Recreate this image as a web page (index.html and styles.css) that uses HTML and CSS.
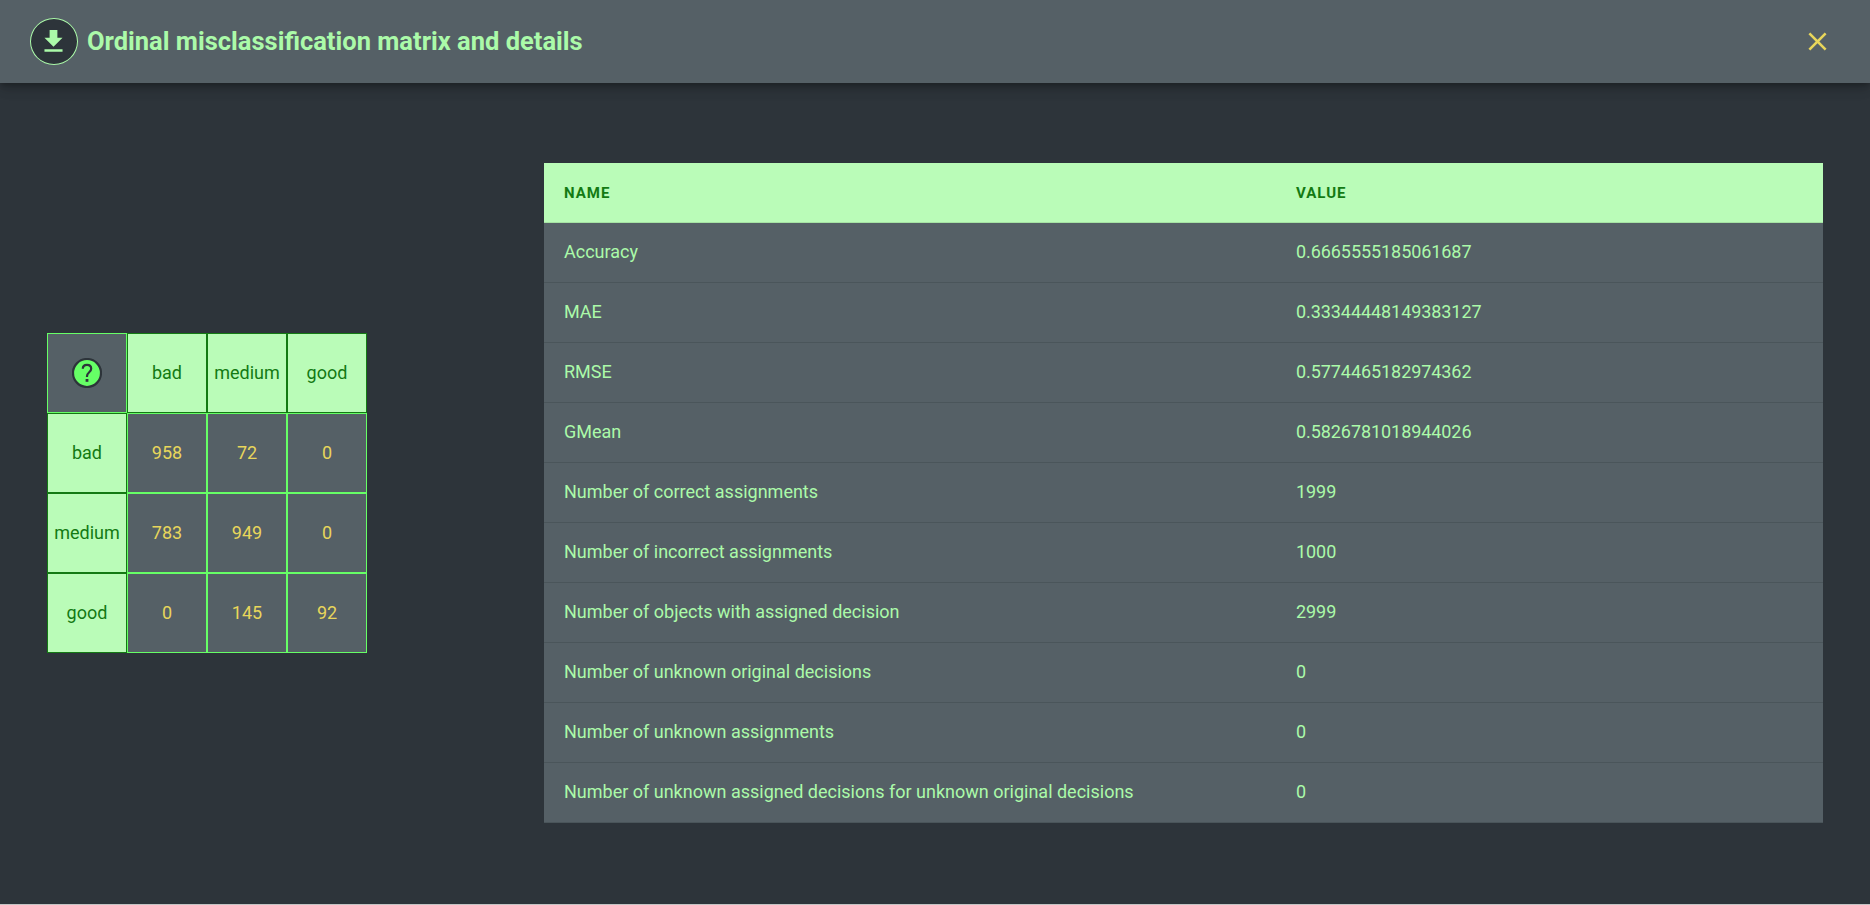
FILE: index.html
```html
<!DOCTYPE html>
<html lang="en">
<head>
<meta charset="utf-8">
<title>Ordinal misclassification matrix and details</title>
<link rel="stylesheet" href="styles.css">
</head>
<body>
<div class="dialog">
  <header class="dialog-header">
    <button class="icon-button download" aria-label="Download matrix">
      <svg class="icon" viewBox="0 0 24 24"><path d="M19 9h-4V3H9v6H5l7 7 7-7zM5 18v2h14v-2H5z"/></svg>
    </button>
    <h1 class="title">Ordinal misclassification matrix and details</h1>
    <button class="icon-button close" aria-label="Close">
      <svg class="icon" viewBox="0 0 24 24"><path d="M19 6.41L17.59 5 12 10.59 6.41 5 5 6.41 10.59 12 5 17.59 6.41 19 12 13.41 17.59 19 19 17.59 13.41 12z"/></svg>
    </button>
  </header>
  <main class="content">
    <div class="matrix">
      <div class="cell corner">
        <svg class="help" viewBox="0 0 30 30"><circle class="help-ring" cx="15" cy="15" r="14"/><path class="help-mark" d="M10.8 10.8c0-2.500 1.700-4 4.200-4s4.200 1.500 4.200 3.900c0 3.500-4.200 3.600-4.200 7.500v.7"/><rect class="help-dot" x="13.600" y="21" width="2.800" height="2.800"/></svg>
      </div>
      <div class="cell head">bad</div><div class="cell head">medium</div><div class="cell head">good</div>
      <div class="cell head">bad</div><div class="cell">958</div><div class="cell">72</div><div class="cell">0</div>
      <div class="cell head">medium</div><div class="cell">783</div><div class="cell">949</div><div class="cell">0</div>
      <div class="cell head">good</div><div class="cell">0</div><div class="cell">145</div><div class="cell">92</div>
    </div>
    <table class="details">
      <thead><tr><th class="name">Name</th><th>Value</th></tr></thead>
      <tbody>
        <tr><td>Accuracy</td><td class="value">0.6665555185061687</td></tr>
        <tr><td>MAE</td><td class="value">0.33344448149383127</td></tr>
        <tr><td>RMSE</td><td class="value">0.5774465182974362</td></tr>
        <tr><td>GMean</td><td class="value">0.5826781018944026</td></tr>
        <tr><td>Number of correct assignments</td><td class="value">1999</td></tr>
        <tr><td>Number of incorrect assignments</td><td class="value">1000</td></tr>
        <tr><td>Number of objects with assigned decision</td><td class="value">2999</td></tr>
        <tr><td>Number of unknown original decisions</td><td class="value">0</td></tr>
        <tr><td>Number of unknown assignments</td><td class="value">0</td></tr>
        <tr><td>Number of unknown assigned decisions for unknown original decisions</td><td class="value">0</td></tr>
      </tbody>
    </table>
  </main>
</div>
</body>
</html>
```
FILE: styles.css
```css
* { box-sizing: border-box; }

body {
  margin: 0;
  background: #c4c4c4;
  font-family: Roboto, "Liberation Sans", sans-serif;
  font-size: 18px;
}

.dialog {
  display: flex;
  flex-direction: column;
  height: 904px;
  background: #2d343a;
  overflow: hidden;
}

.dialog-header {
  display: flex;
  align-items: center;
  flex: none;
  height: 83px;
  padding: 0 28px 0 30px;
  background: #556066;
  box-shadow: 0 3px 5px -1px rgba(0, 0, 0, .2), 0 6px 10px 0 rgba(0, 0, 0, .14), 0 1px 18px 0 rgba(0, 0, 0, .12);
}

.title {
  flex: 1;
  margin: 0 0 2px 9px;
  color: #abfaa9;
  font-size: 25.5px;
  font-weight: 700;
  line-height: 32px;
}

.icon-button {
  display: flex;
  align-items: center;
  justify-content: center;
  width: 48px;
  height: 47px;
  padding: 0 1px 1px 0;
  border: 0;
  border-radius: 50%;
  background: none;
}

.download { border: 1px solid #abfaa9; background: #2d343a; color: #abfaa9; }
.close { color: #e8d65b; }
.icon { width: 31px; height: 31px; fill: currentColor; }

.content {
  display: flex;
  align-items: center;
  justify-content: space-between;
  flex: 1;
  padding: 0 47px 2px;
}

.matrix {
  display: grid;
  grid-template-columns: repeat(4, 80px);
  grid-auto-rows: 80px;
}

.cell {
  display: flex;
  align-items: center;
  justify-content: center;
  border: 1px solid #66ff66;
  background: #556066;
  color: #e8d65b;
}

.head { border-color: #137a13; background: #bafcb8; color: #137a13; }
.help { width: 30px; height: 30px; }
.help-ring { fill: #66ff66; stroke: #2d343a; stroke-width: 2.200; }
.help-mark { fill: none; stroke: #2d343a; stroke-width: 2.200; }
.help-dot { fill: #2d343a; }

.details {
  width: 1279px;
  border-collapse: separate;
  border-spacing: 0;
  table-layout: fixed;
  background: #556066;
  color: #abfaa9;
}

.details th, .details td {
  height: 60px;
  padding: 0 20px 2px;
  border-bottom: 1px solid #4a555a;
  text-align: left;
}

.details th {
  padding: 1px 20px 0;
  border-color: #a6e3a4;
  background: #bafcb8;
  color: #137a13;
  font-size: 15px;
  letter-spacing: 1px;
  text-transform: uppercase;
}

.details .name { width: 732px; }
.details .value { letter-spacing: -.07px; }
```
